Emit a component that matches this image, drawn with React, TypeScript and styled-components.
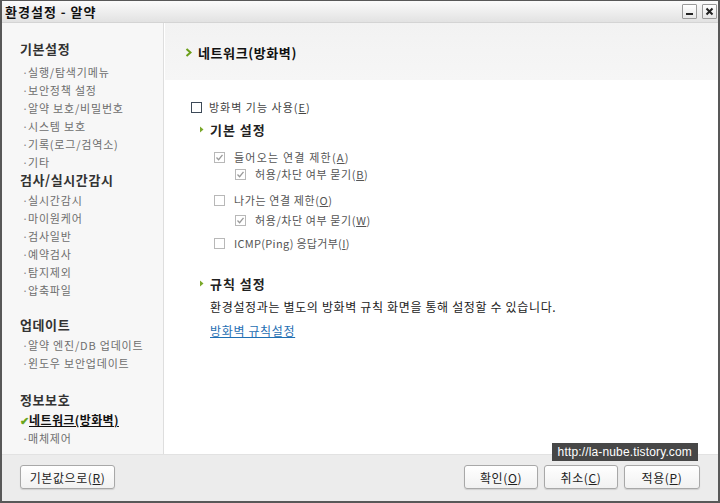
import React from "react";
import styled, { createGlobalStyle } from "styled-components";

const Global = createGlobalStyle`
  html, body { margin: 0; padding: 0; background: #fff; }
  body { font-family: "Noto Sans CJK KR", "Noto Sans", sans-serif; }
  * { box-sizing: border-box; }
`;

const Window = styled.div`
  position: relative;
  width: 720px;
  height: 503px;
  display: flex;
  flex-direction: column;
  border: 2px solid #585858;
  border-top-width: 1px;
  background: #ededed;
  overflow: hidden;
`;

const TitleBar = styled.div`
  height: 22px;
  flex: none;
  display: flex;
  align-items: center;
  justify-content: space-between;
  padding: 0 1px 0 3px;
  background: linear-gradient(#fbfbfb, #e2e2e2);
  border-bottom: 1px solid #d4d4d4;
`;

const Title = styled.div`
  font-size: 13px;
  font-weight: 700;
  color: #111;
  letter-spacing: 1px;
`;

const TitleButtons = styled.div`
  display: flex;
  gap: 5px;
`;

const TitleButton = styled.div`
  width: 15px;
  height: 15px;
  border: 1px solid #9a9a9a;
  border-radius: 1px;
  background: linear-gradient(#ffffff, #e6e6e6);
  display: flex;
  align-items: center;
  justify-content: center;
`;

const Main = styled.div`
  flex: 1;
  display: flex;
  min-height: 0;
  background: #fff;
`;

const Sidebar = styled.div`
  width: 162px;
  flex: none;
  background: #f7f7f7;
  border-right: 1px solid #dedede;
  margin-right: 1px;
  padding: 16px 0 0 18px;
`;

const Group = styled.div<{ $mt: number }>`
  margin-top: ${(p) => p.$mt}px;
`;

const GroupTitle = styled.div<{ $mb: number }>`
  font-size: 13px;
  font-weight: 700;
  color: #333;
  line-height: 20px;
  letter-spacing: 0.6px;
  margin-bottom: ${(p) => p.$mb}px;
`;

const NavItem = styled.div<{ $active?: boolean }>`
  font-size: 11px;
  line-height: 18px;
  height: 18px;
  letter-spacing: 0.8px;
  color: ${(p) => (p.$active ? "#111" : "#6e6e6e")};
  font-weight: ${(p) => (p.$active ? 700 : 400)};
  display: flex;
  align-items: center;
  padding-left: 2px;
`;

const Bullet = styled.span`
  display: inline-block;
  width: 6px;
  color: #888;
`;

const Check = styled.span`
  color: #6aa61e;
  font-size: 11px;
  width: 9px;
  margin-left: -2px;
`;

const ActiveText = styled.span`
  text-decoration: underline;
  font-size: 12px;
  letter-spacing: 0.4px;
`;

const Content = styled.div`
  flex: 1;
  display: flex;
  flex-direction: column;
`;

const ContentHeader = styled.div`
  height: 57px;
  flex: none;
  display: flex;
  align-items: center;
  gap: 6px;
  padding: 1px 0 0 20px;
  background: linear-gradient(#f2f2f2, #f6f6f6);
`;

const HeaderTitle = styled.div`
  font-size: 13px;
  font-weight: 700;
  color: #111;
  letter-spacing: 0.6px;
`;

const ContentBody = styled.div`
  padding: 18px 0 0 26px;
`;

const Row = styled.label<{ $indent: number; $mt: number; $ls?: number }>`
  display: flex;
  align-items: center;
  height: 18px;
  margin-top: ${(p) => p.$mt}px;
  padding-left: ${(p) => p.$indent}px;
  font-size: 11px;
  letter-spacing: ${(p) => p.$ls ?? 1}px;
  color: #333;
`;

const Box = styled.span<{ $dark?: boolean }>`
  width: 11px;
  height: 11px;
  flex: none;
  border: 1px solid ${(p) => (p.$dark ? "#3d4a58" : "#b8b8b8")};
  background: #fff;
  margin-right: ${(p) => (p.$dark ? 7 : 9)}px;
  display: flex;
  align-items: center;
  justify-content: center;
`;

const RowText = styled.span<{ $dim?: boolean }>`
  color: ${(p) => (p.$dim ? "#555" : "#444")};
`;

const Key = styled.span`
  text-decoration: underline;
`;

const SubHeading = styled.div<{ $mt: number }>`
  display: flex;
  align-items: center;
  height: 18px;
  margin-top: ${(p) => p.$mt}px;
  padding-left: 8px;
  gap: 6px;
  font-size: 13px;
  font-weight: 700;
  letter-spacing: 1px;
  color: #222;
`;

const Para = styled.div<{ $mt: number }>`
  margin-top: ${(p) => p.$mt}px;
  padding-left: 19px;
  font-size: 12px;
  line-height: 18px;
  letter-spacing: 0.65px;
  color: #222;
`;

const Link = styled.a`
  color: #1f6fb3;
  text-decoration: underline;
  cursor: pointer;
`;

const Footer = styled.div`
  height: 47px;
  flex: none;
  display: flex;
  justify-content: space-between;
  align-items: flex-start;
  padding: 10px 18px 0 18px;
  background: #ececec;
  border-top: 1px solid #e2e2e2;
`;

const ButtonGroup = styled.div`
  display: flex;
  gap: 6px;
`;

const Button = styled.button<{ $w: number }>`
  width: ${(p) => p.$w}px;
  height: 24px;
  border: 1px solid #a8a8a8;
  border-radius: 3px;
  background: linear-gradient(#ffffff, #f1f1f1);
  box-shadow: 0 1px 1px rgba(0, 0, 0, 0.12);
  font-family: "Noto Sans CJK KR", sans-serif;
  font-size: 12px;
  letter-spacing: 0.6px;
  color: #222;
  padding: 0;
`;

const Watermark = styled.div`
  position: absolute;
  right: 20px;
  bottom: 40px;
  height: 18px;
  padding: 0 6px;
  background: #474747;
  color: #fff;
  font-family: "Liberation Sans", Arial, sans-serif;
  font-size: 12px;
  letter-spacing: 0.15px;
  line-height: 18px;
`;

const Chevron = ({ size = 7 }: { size?: number }) => (
  <svg width={size} height={size + 2} viewBox="0 0 7 9">
    <path d="M1.5 1 L5.5 4.5 L1.5 8" stroke="#6a9e18" strokeWidth="2" fill="none" />
  </svg>
);

const SmallArrow = () => (
  <svg width="5" height="7" viewBox="0 0 5 7">
    <path d="M1 0.5 L4.5 3.5 L1 6.5 Z" fill="#7aa82a" />
  </svg>
);

const Tick = () => (
  <svg width="9" height="9" viewBox="0 0 9 9">
    <path d="M1.5 4.5 L3.6 6.7 L7.5 1.8" stroke="#9a9a9a" strokeWidth="1.3" fill="none" />
  </svg>
);

const nav1 = ["실행/탐색기메뉴", "보안정책 설정", "알약 보호/비밀번호", "시스템 보호", "기록(로그/검역소)", "기타"];
const nav2 = ["실시간감시", "마이원케어", "검사일반", "예약검사", "탐지제외", "압축파일"];
const nav3 = ["알약 엔진/DB 업데이트", "윈도우 보안업데이트"];

const Item = ({ text }: { text: string }) => (
  <NavItem>
    <Bullet>·</Bullet>
    {text}
  </NavItem>
);

export default function App() {
  return (
    <>
      <Global />
      <Window>
        <TitleBar>
          <Title>환경설정 - 알약</Title>
          <TitleButtons>
            <TitleButton>
              <svg width="9" height="9" viewBox="0 0 9 9">
                <rect x="1" y="6" width="7" height="2" fill="#222" />
              </svg>
            </TitleButton>
            <TitleButton>
              <svg width="9" height="9" viewBox="0 0 9 9">
                <path d="M1.5 1.5 L7.5 7.5 M7.5 1.5 L1.5 7.5" stroke="#222" strokeWidth="2" />
              </svg>
            </TitleButton>
          </TitleButtons>
        </TitleBar>
        <Main>
          <Sidebar>
            <Group $mt={0}>
              <GroupTitle $mb={4}>기본설정</GroupTitle>
              {nav1.map((t) => (
                <Item key={t} text={t} />
              ))}
            </Group>
            <Group $mt={-1}>
              <GroupTitle $mb={1}>검사/실시간감시</GroupTitle>
              {nav2.map((t) => (
                <Item key={t} text={t} />
              ))}
            </Group>
            <Group $mt={16}>
              <GroupTitle $mb={1}>업데이트</GroupTitle>
              {nav3.map((t) => (
                <Item key={t} text={t} />
              ))}
            </Group>
            <Group $mt={18}>
              <GroupTitle $mb={1}>정보보호</GroupTitle>
              <NavItem $active>
                <Check>✔</Check>
                <ActiveText>네트워크(방화벽)</ActiveText>
              </NavItem>
              <Item text="매체제어" />
            </Group>
          </Sidebar>
          <Content>
            <ContentHeader>
              <Chevron />
              <HeaderTitle>네트워크(방화벽)</HeaderTitle>
            </ContentHeader>
            <ContentBody>
              <Row $indent={0} $mt={0}>
                <Box $dark />
                <RowText>
                  방화벽 기능 사용(<Key>E</Key>)
                </RowText>
              </Row>
              <SubHeading $mt={4}>
                <SmallArrow />
                기본 설정
              </SubHeading>
              <Row $indent={23} $mt={10} $ls={1.2}>
                <Box>
                  <Tick />
                </Box>
                <RowText $dim>
                  들어오는 연결 제한(<Key>A</Key>)
                </RowText>
              </Row>
              <Row $indent={44} $mt={-1} $ls={0.6}>
                <Box>
                  <Tick />
                </Box>
                <RowText $dim>
                  허용/차단 여부 묻기(<Key>B</Key>)
                </RowText>
              </Row>
              <Row $indent={23} $mt={8} $ls={0.6}>
                <Box />
                <RowText $dim>
                  나가는 연결 제한(<Key>O</Key>)
                </RowText>
              </Row>
              <Row $indent={44} $mt={2} $ls={0.6}>
                <Box>
                  <Tick />
                </Box>
                <RowText $dim>
                  허용/차단 여부 묻기(<Key>W</Key>)
                </RowText>
              </Row>
              <Row $indent={23} $mt={5} $ls={0.3}>
                <Box />
                <RowText $dim>
                  ICMP(Ping) 응답거부(<Key>I</Key>)
                </RowText>
              </Row>
              <SubHeading $mt={22}>
                <SmallArrow />
                규칙 설정
              </SubHeading>
              <Para $mt={6}>환경설정과는 별도의 방화벽 규칙 화면을 통해 설정할 수 있습니다.</Para>
              <Para $mt={6}>
                <Link>방화벽 규칙설정</Link>
              </Para>
            </ContentBody>
          </Content>
        </Main>
        <Footer>
          <Button $w={95}>
            기본값으로(<Key>R</Key>)
          </Button>
          <ButtonGroup>
            <Button $w={74}>
              확인(<Key>O</Key>)
            </Button>
            <Button $w={74}>
              취소(<Key>C</Key>)
            </Button>
            <Button $w={76}>
              적용(<Key>P</Key>)
            </Button>
          </ButtonGroup>
        </Footer>
        <Watermark>http://la-nube.tistory.com</Watermark>
      </Window>
    </>
  );
}
